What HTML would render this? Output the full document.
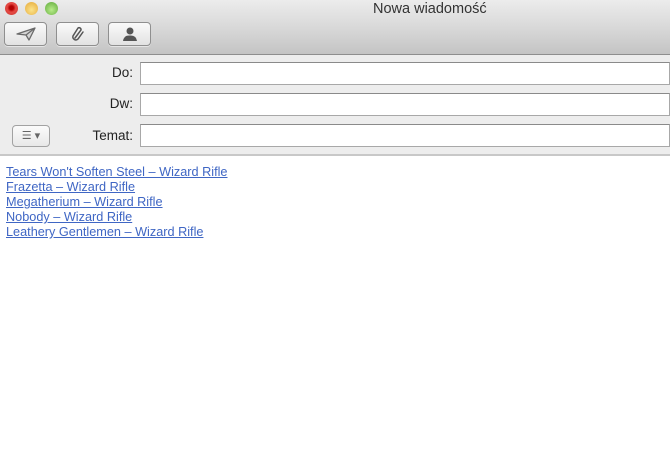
<!DOCTYPE html>
<html><head><meta charset="utf-8"><style>
*{margin:0;padding:0;box-sizing:border-box}
body{width:670px;height:472px;overflow:hidden;background:#fff;font-family:"Liberation Sans","DejaVu Sans",sans-serif;position:relative}
#tb{position:absolute;left:0;top:0;width:670px;height:55px;background:linear-gradient(#ececec,#d9d9d9 50%,#c4c4c4);border-bottom:1px solid #8e8e8e}
.dot{position:absolute;top:2px;width:13px;height:13px;border-radius:50%}
#title{position:absolute;left:373px;top:1px;font-size:14.5px;color:#333}
.btn{position:absolute;top:22px;height:24px;border:1px solid #8f8f8f;border-radius:4px;background:linear-gradient(#fafafa,#e2e2e2);box-shadow:0 1px 0 rgba(255,255,255,.5)}
.btn svg{position:absolute;left:50%;top:50%;transform:translate(-50%,-50%)}
#hdr{position:absolute;left:0;top:55px;width:670px;height:101px;background:#ededed;border-bottom:2px solid #c8c8c8}
.lab{position:absolute;right:537px;font-size:13.5px;color:#222}
.fld{position:absolute;left:140px;width:530px;height:23px;background:#fff;border:1px solid #a8a8a8;border-top-color:#8a8a8a}
#menu{position:absolute;left:12px;top:125px;width:38px;height:22px;border:1px solid #a2a2a2;border-radius:4px;background:linear-gradient(#fbfbfb,#e8e8e8);font-size:11px;color:#666;text-align:center;line-height:20px}
#body{position:absolute;left:6px;top:165px;font-size:12.7px;line-height:15px}
#body a{color:#3f66c4;text-decoration:underline;display:block}
</style></head><body>
<div id="tb">
<div class="dot" style="left:5px;background:radial-gradient(circle at 50% 45%,#b30000 20%,#e64a44 45%,#c83a34)"></div>
<div class="dot" style="left:25px;background:radial-gradient(circle at 50% 60%,#fbe38a,#e5a838)"></div>
<div class="dot" style="left:45px;background:radial-gradient(circle at 50% 60%,#b8ec8a,#5ea83a)"></div>
<div id="title">Nowa wiadomość</div>
<div class="btn" style="left:4px;width:43px"><svg width="20" height="14" viewBox="0 0 20 14"><path d="M1 7 L19 1 L13 13 L10 8 Z M10 8 L19 1" fill="#d5d5d5" stroke="#6a6a6a" stroke-width="1.3" stroke-linejoin="round"/></svg></div>
<div class="btn" style="left:56px;width:43px"><svg width="14" height="16" viewBox="0 0 14 16"><path d="M4 12 L10 4 A2 2 0 0 0 7 2 L2 10 A3 3 0 0 0 7 13 L12 6" fill="none" stroke="#555" stroke-width="1.5" stroke-linecap="round"/></svg></div>
<div class="btn" style="left:108px;width:43px"><svg width="16" height="16" viewBox="0 0 16 16"><circle cx="8" cy="5" r="3.5" fill="#555"/><path d="M1 15 Q2 9 8 9.5 Q14 9 15 15 Z" fill="#555"/></svg></div>
</div>
<div id="hdr"></div>
<div class="lab" style="top:65px">Do:</div>
<div class="lab" style="top:96px">Dw:</div>
<div class="lab" style="top:128px">Temat:</div>
<div class="fld" style="top:62px"></div>
<div class="fld" style="top:93px"></div>
<div class="fld" style="top:124px"></div>
<div id="menu">☰ ▾</div>
<div id="body">
<a>Tears Won't Soften Steel – Wizard Rifle</a>
<a>Frazetta – Wizard Rifle</a>
<a>Megatherium – Wizard Rifle</a>
<a>Nobody – Wizard Rifle</a>
<a>Leathery Gentlemen – Wizard Rifle</a>
</div>
</body></html>
